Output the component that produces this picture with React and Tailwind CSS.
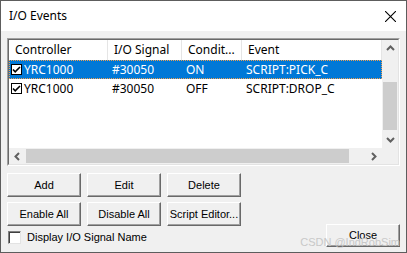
const COLS = [
  { label: 'Controller', w: 'w-[99px]' },
  { label: 'I/O Signal', w: 'w-[74px]' },
  { label: 'Condit...', w: 'w-[60px]' },
  { label: 'Event', w: 'flex-1' },
]

const ROWS = [
  { ctrl: 'YRC1000', sig: '#30050', cond: 'ON', event: 'SCRIPT:PICK_C', selected: true },
  { ctrl: 'YRC1000', sig: '#30050', cond: 'OFF', event: 'SCRIPT:DROP_C', selected: false },
]

function Chevron({ dir }) {
  const pts = {
    up: '1,6 4.5,2.5 8,6',
    down: '1,3 4.5,6.5 8,3',
    left: '6,1 2.5,4.5 6,8',
    right: '3,1 6.5,4.5 3,8',
  }[dir]
  return (
    <svg viewBox="0 0 9 9" className="w-[9px] h-[9px]">
      <polyline points={pts} fill="none" stroke="#606060" strokeWidth="2" />
    </svg>
  )
}

function RowCheck() {
  return (
    <span className="w-[11px] h-[11px] bg-white border border-black flex items-center justify-center shrink-0">
      <svg viewBox="0 0 9 9" className="w-[9px] h-[9px]">
        <path d="M1 4.5l2.2 2.3L8 2" fill="none" stroke="black" strokeWidth="1.6" />
      </svg>
    </span>
  )
}

function Btn({ children, className = 'w-[74px] h-[24px]' }) {
  return (
    <button
      className={`${className} bg-[#f0f0f0] border border-t-white border-l-white border-r-[#696969] border-b-[#696969] shadow-[inset_-1px_-1px_0_#a0a0a0] text-[11px] text-black flex items-center justify-center`}
      style={{ fontFamily: '"Liberation Sans", Arial, sans-serif' }}
    >
      {children}
    </button>
  )
}

export default function App() {
  return (
    <div
      className="relative w-[407px] h-[253px] border border-[#5d5d5d] bg-[#f0f0f0] flex flex-col overflow-hidden"
      style={{ fontFamily: '"Noto Sans", "Open Sans", sans-serif' }}
    >
      <div className="h-[30px] bg-white flex items-center justify-between pl-[8px] pr-[10px] shrink-0">
        <span className="text-[12px] text-black">I/O Events</span>
        <svg viewBox="0 0 10 10" className="w-[11px] h-[11px]">
          <path d="M0 0L10 10M10 0L0 10" stroke="black" strokeWidth="1" />
        </svg>
      </div>

      <div className="px-[6px] pt-[7px] flex flex-col">
        {/* list view */}
        <div className="h-[128px] border border-t-[#a0a0a0] border-l-[#a0a0a0] border-r-white border-b-white">
          <div className="h-full border border-t-[#696969] border-l-[#696969] border-r-[#e3e3e3] border-b-[#e3e3e3] flex flex-col bg-white">
            <div className="flex flex-1 min-h-0">
              <div className="flex-1 flex flex-col text-[12px]">
                <div className="h-[20px] flex items-stretch">
                  {COLS.map((c) => (
                    <div key={c.label} className={`${c.w} border-r border-[#e5e5e5] pl-[6px] flex items-center text-black`}>
                      {c.label}
                    </div>
                  ))}
                </div>
                {ROWS.map((r, i) => (
                  <div
                    key={i}
                    className={`h-[19px] flex items-center ${r.selected ? 'bg-[#0078d7] text-white border border-dotted border-[#f0a050]' : 'text-black border border-transparent'}`}
                  >
                    <div className="w-[99px] flex items-center gap-[2px] pl-[1px]">
                      <RowCheck />
                      <span>{r.ctrl}</span>
                    </div>
                    <div className="w-[74px] pl-[3px]">{r.sig}</div>
                    <div className="w-[60px] pl-[3px]">{r.cond}</div>
                    <div className="flex-1 pl-[3px]">{r.event}</div>
                  </div>
                ))}
              </div>
              {/* vertical scrollbar */}
              <div className="w-[16px] bg-[#f0f0f0] flex flex-col">
                <div className="h-[17px] flex items-center justify-center"><Chevron dir="up" /></div>
                <div className="h-[25px]" />
                <div className="h-[48px] bg-[#cdcdcd] mx-[1px]" />
                <div className="flex-1" />
                <div className="h-[17px] flex items-center justify-center"><Chevron dir="down" /></div>
              </div>
            </div>
            {/* horizontal scrollbar */}
            <div className="h-[16px] flex shrink-0">
              <div className="flex-1 bg-[#f0f0f0] flex items-stretch">
                <div className="w-[17px] flex items-center justify-center"><Chevron dir="left" /></div>
                <div className="w-[323px] bg-[#cdcdcd] my-[1px]" />
                <div className="flex-1" />
                <div className="w-[17px] flex items-center justify-center"><Chevron dir="right" /></div>
              </div>
              <div className="w-[16px] bg-[#f0f0f0]" />
            </div>
          </div>
        </div>

        {/* buttons */}
        <div className="flex justify-between items-end mt-[7px]">
          <div className="flex flex-col">
            <div className="flex gap-[6px]">
              <Btn>Add</Btn>
              <Btn>Edit</Btn>
              <Btn>Delete</Btn>
            </div>
            <div className="flex gap-[6px] mt-[5px]">
              <Btn>Enable All</Btn>
              <Btn>Disable All</Btn>
              <Btn>Script Editor...</Btn>
            </div>
            <div
              className="h-[13px] flex items-center gap-[6px] mt-[5px] pl-[1px] text-[11px] leading-[13px] text-black"
              style={{ fontFamily: '"Liberation Sans", Arial, sans-serif' }}
            >
              <span className="w-[13px] h-[13px] bg-white border border-t-[#808080] border-l-[#808080] border-r-[#e3e3e3] border-b-[#e3e3e3] shadow-[inset_1px_1px_0_#404040]" />
              <span>Display I/O Signal Name</span>
            </div>
          </div>
          <div className="mb-[-3px]">
            <Btn className="w-[74px] h-[23px]">Close</Btn>
          </div>
        </div>
      </div>

      <span
        className="absolute right-[6px] bottom-[4px] text-[11px] leading-[12px] text-[#c8c8c8] pointer-events-none"
        style={{ fontFamily: '"Liberation Sans", Arial, sans-serif' }}
      >
        CSDN @IndRobSim
      </span>
    </div>
  )
}
